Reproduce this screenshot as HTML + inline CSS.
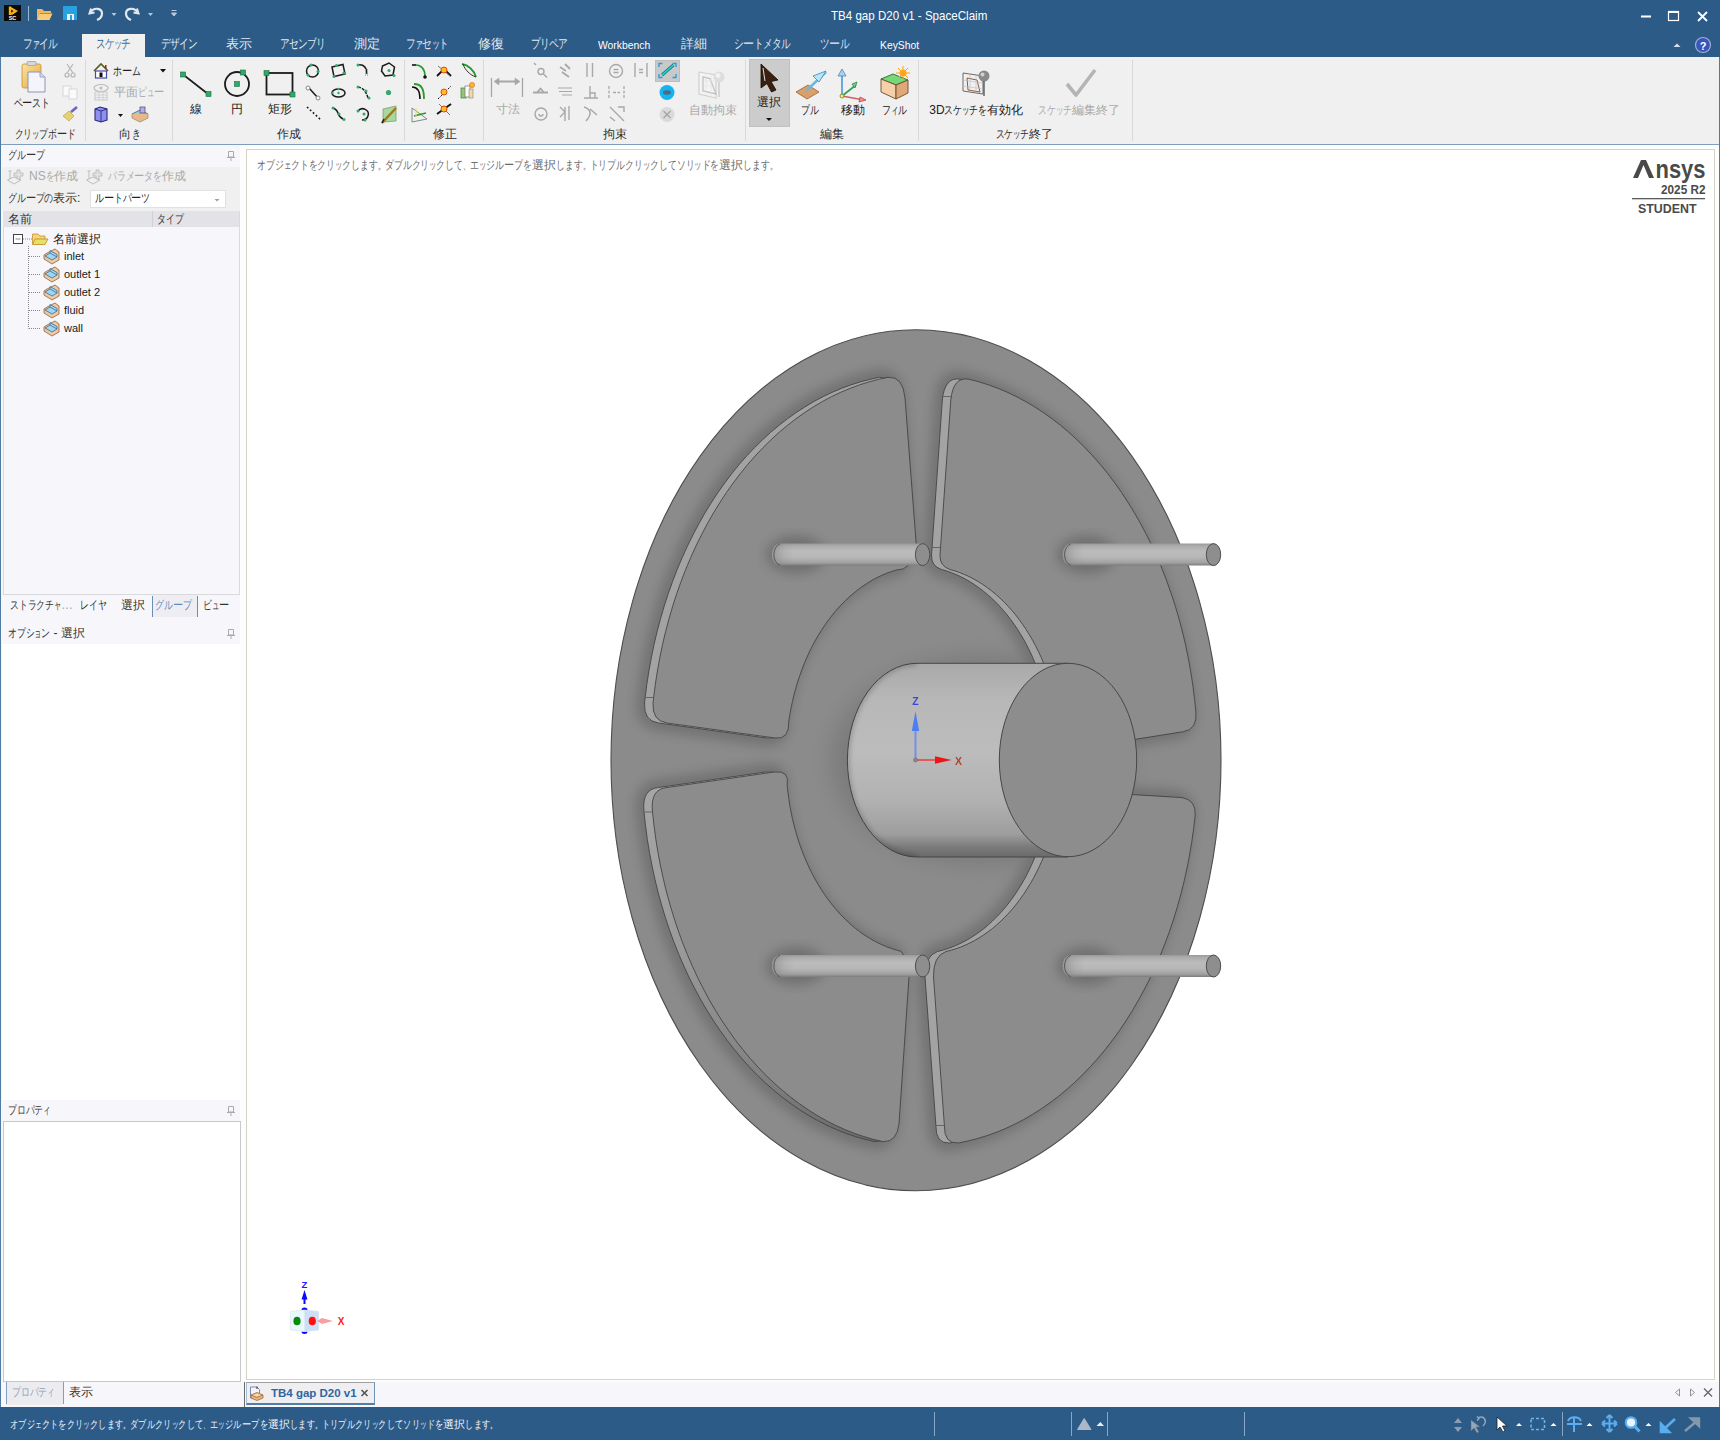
<!DOCTYPE html>
<html><head><meta charset="utf-8">
<style>
*{margin:0;padding:0;box-sizing:border-box}
html,body{width:1720px;height:1440px;overflow:hidden;background:#fff;font-family:"Liberation Sans",sans-serif;font-size:12px;color:#1e1e1e}
.a{position:absolute}
.t{position:absolute;white-space:nowrap}
.j{position:absolute;white-space:nowrap;line-height:12px}
.c{position:absolute;white-space:nowrap;line-height:12px;transform:translateX(-50%)}
b.k,b.ks,b.kl,b.kp{font-weight:normal;display:inline-block;transform-origin:0 0}
b.k{width:.733em;transform:scaleX(.74)}
b.ks{width:.583em;transform:scaleX(.62)}
b.kl{width:.833em;transform:scaleX(.85)}
b.kp{width:.583em;transform:scaleX(.6)}
.tab{top:38px;color:#e2e9f0;font-size:12.5px}
.gl{top:128px;color:#2b2b2b}
.bl{color:#202020}
.dis{color:#a9a9a9}
#title{left:0;top:0;width:1720px;height:57px;background:#2c5b88}
#ribbon{left:1px;top:57px;width:1718px;height:87px;background:#f0f0f0}
#rline{left:0;top:144px;width:1720px;height:1px;background:#7d9ebe}
#lb{left:0;top:57px;width:1px;height:1350px;background:#4f7aa2}
#rb{left:1719px;top:57px;width:1px;height:1350px;background:#4f7aa2}
#panel{left:1px;top:145px;width:239px;height:1262px;background:#f7f7fb}
#gap{left:240px;top:145px;width:1479px;height:1262px;background:#fdfdfe}
#vp{left:246px;top:149px;width:1469px;height:1231px;background:#fff;border:1px solid #d6d3c4}
#status{left:0;top:1407px;width:1720px;height:33px;background:#2c5b88}
.sep{position:absolute;width:1px;top:60px;height:81px;background:#d9d9d9}
</style></head><body>
<div id="title" class="a"></div>
<div id="ribbon" class="a"></div>
<div id="rline" class="a"></div>
<div id="panel" class="a"></div>
<div id="gap" class="a"></div>
<div id="vp" class="a"></div>
<div id="status" class="a"></div>
<div id="lb" class="a"></div>
<div id="rb" class="a"></div>
<!-- TITLE BAR -->
<svg class="a" style="left:0;top:0" width="200" height="30">
  <rect x="4" y="5" width="17" height="16" fill="#0a0a0a"/>
  <path d="M10 6.5 L18 11 L12 15 L10 13.5 L13.5 11 L10 9 Z" fill="#f5b316"/>
  <path d="M10 6.5 L10 15" stroke="#f5b316" stroke-width="2.4"/>
  <text x="12.5" y="20.3" font-size="5.5" font-weight="bold" fill="#fff" text-anchor="middle" font-family="Liberation Sans">SC</text>
  <line x1="28.5" y1="6" x2="28.5" y2="21" stroke="#9fb4c9" stroke-width="1"/>
  <path d="M37 9 L42 9 L44 11 L51 11 L51 13 L40 13 L37 20 Z" fill="#f0b75a"/>
  <path d="M39.5 13.5 L52.5 13.5 L49.5 20 L37 20 Z" fill="#f9cb7a"/>
  <rect x="63" y="6" width="14" height="14" fill="#27a2de"/>
  <rect x="67" y="14" width="7" height="6" fill="#e8f4fb"/>
  <rect x="70" y="15" width="2" height="5" fill="#27a2de"/>
  <path d="M91 8.5 L89.5 13.5 L94.5 12.5" fill="none" stroke="#e3e8ef" stroke-width="2"/>
  <path d="M90.5 12 C94 7 102 8 102 13.5 C102 17 99.5 19 97 20" fill="none" stroke="#e3e8ef" stroke-width="2.2"/>
  <path d="M111.5 13 L116.5 13 L114 16 Z" fill="#b9c7d6"/>
  <path d="M137 8.5 L138.5 13.5 L133.5 12.5" fill="none" stroke="#e3e8ef" stroke-width="2"/>
  <path d="M137.5 12 C134 7 126 8 126 13.5 C126 17 128.5 19 131 20" fill="none" stroke="#e3e8ef" stroke-width="2.2"/>
  <path d="M148 13 L153 13 L150.5 16 Z" fill="#b9c7d6"/>
  <path d="M171.5 10.5 L176.5 10.5 M171.5 13 L176.5 13 L174 16 Z" fill="#b9c7d6" stroke="#b9c7d6" stroke-width="1"/>
</svg>
<div class="t" style="left:831px;top:9px;font-size:13px;line-height:14px;color:#fff;transform-origin:0 0;transform:scaleX(.89)">TB4 gap D20 v1 - SpaceClaim</div>
<svg class="a" style="left:1630px;top:0" width="90" height="57">
  <rect x="11" y="15.5" width="10" height="2" fill="#fff"/>
  <rect x="38.5" y="11.5" width="10" height="9" fill="none" stroke="#fff" stroke-width="1.2"/>
  <rect x="38" y="11" width="11" height="2" fill="#fff"/>
  <path d="M68 12 L77 21 M77 12 L68 21" stroke="#fff" stroke-width="1.8"/>
  <path d="M43.5 47 L47 43.5 L50.5 47 Z" fill="#d8dfe8"/>
  <circle cx="73" cy="45" r="7.5" fill="#3a55b8" stroke="#9fb0d8" stroke-width="1.2"/>
  <text x="73" y="49.5" font-size="11" font-weight="bold" fill="#fff" text-anchor="middle" font-family="Liberation Sans">?</text>
</svg>
<!-- TABS -->
<div class="a" style="left:82px;top:34px;width:63px;height:23px;background:#f0f0f0"></div>
<div class="c tab" style="left:39.5px"><b class="k">フ</b><b class="ks">ァ</b><b class="k">イ</b><b class="k">ル</b></div>
<div class="c tab" style="left:112.5px;color:#3f6e9c"><b class="k">ス</b><b class="k">ケ</b><b class="ks">ッ</b><b class="k">チ</b></div>
<div class="c tab" style="left:179px"><b class="k">デ</b><b class="k">ザ</b><b class="k">イ</b><b class="k">ン</b></div>
<div class="c tab" style="left:239px">表示</div>
<div class="c tab" style="left:302.5px"><b class="k">ア</b><b class="k">セ</b><b class="k">ン</b><b class="k">ブ</b><b class="k">リ</b></div>
<div class="c tab" style="left:366.5px">測定</div>
<div class="c tab" style="left:427px"><b class="k">フ</b><b class="ks">ァ</b><b class="k">セ</b><b class="ks">ッ</b><b class="k">ト</b></div>
<div class="c tab" style="left:490.5px">修復</div>
<div class="c tab" style="left:549px"><b class="k">プ</b><b class="k">リ</b><b class="k">ペ</b><b class="k">ア</b></div>
<div class="t" style="left:598px;top:39px;font-size:11.5px;line-height:12px;color:#fff;transform-origin:0 0;transform:scaleX(.9)">Workbench</div>
<div class="c tab" style="left:694px">詳細</div>
<div class="c tab" style="left:762px"><b class="k">シ</b><b class="kl">ー</b><b class="k">ト</b><b class="k">メ</b><b class="k">タ</b><b class="k">ル</b></div>
<div class="c tab" style="left:834px"><b class="k">ツ</b><b class="kl">ー</b><b class="k">ル</b></div>
<div class="t" style="left:880px;top:39px;font-size:11.5px;line-height:12px;color:#fff;transform-origin:0 0;transform:scaleX(.9)">KeyShot</div>
<!-- RIBBON -->
<div class="sep" style="left:85px"></div>
<div class="sep" style="left:172px"></div>
<div class="sep" style="left:404px"></div>
<div class="sep" style="left:483px"></div>
<div class="sep" style="left:745px"></div>
<div class="sep" style="left:918px"></div>
<div class="sep" style="left:1132px"></div>
<div class="c gl" style="left:44.5px"><b class="k">ク</b><b class="k">リ</b><b class="ks">ッ</b><b class="k">プ</b><b class="k">ボ</b><b class="kl">ー</b><b class="k">ド</b></div>
<div class="c gl" style="left:129.5px">向<b class="k">き</b></div>
<div class="c gl" style="left:289px">作成</div>
<div class="c gl" style="left:444.5px">修正</div>
<div class="c gl" style="left:615px">拘束</div>
<div class="c gl" style="left:832px">編集</div>
<div class="c gl" style="left:1024.5px"><b class="k">ス</b><b class="k">ケ</b><b class="ks">ッ</b><b class="k">チ</b>終了</div>
<!-- buttons highlight -->
<div class="a" style="left:655px;top:60px;width:25px;height:22px;background:#c9c9c9;border:1px solid #bdbdbd"></div>
<div class="a" style="left:749px;top:59px;width:41px;height:68px;background:#cccccc;border:1px solid #c0c0c0"></div>
<!-- labels -->
<div class="c bl" style="left:31.5px;top:97px"><b class="k">ペ</b><b class="kl">ー</b><b class="k">ス</b><b class="k">ト</b></div>
<div class="j bl" style="left:113px;top:65px"><b class="k">ホ</b><b class="kl">ー</b><b class="k">ム</b></div>
<div class="j dis" style="left:114px;top:86px">平面<b class="k">ピ</b><b class="ks">ュ</b><b class="kl">ー</b></div>
<div class="c bl" style="left:195.5px;top:103px">線</div>
<div class="c bl" style="left:237px;top:103px">円</div>
<div class="c bl" style="left:279.5px;top:103px">矩形</div>
<div class="c dis" style="left:507.5px;top:103px">寸法</div>
<div class="c dis" style="left:712.5px;top:104px">自動拘束</div>
<div class="c bl" style="left:769px;top:96px">選択</div>
<div class="c bl" style="left:810px;top:104px"><b class="k">プ</b><b class="k">ル</b></div>
<div class="c bl" style="left:852.5px;top:104px">移動</div>
<div class="c bl" style="left:894px;top:104px"><b class="k">フ</b><b class="ks">ィ</b><b class="k">ル</b></div>
<div class="c bl" style="left:976px;top:104px">3D<b class="k">ス</b><b class="k">ケ</b><b class="ks">ッ</b><b class="k">チ</b><b class="k">を</b>有効化</div>
<div class="c dis" style="left:1079px;top:104px"><b class="k">ス</b><b class="k">ケ</b><b class="ks">ッ</b><b class="k">チ</b>編集終了</div>
<svg class="a" style="left:0;top:57px" width="1140" height="87" viewBox="0 57 1140 87">
 <defs>
  <linearGradient id="clip" x1="0" y1="0" x2="1" y2="1"><stop offset="0" stop-color="#fbe3a3"/><stop offset="1" stop-color="#e2a73e"/></linearGradient>
 </defs>
 <!-- paste -->
 <rect x="22" y="64" width="19" height="24" rx="2" fill="url(#clip)" stroke="#c98f2e" stroke-width=".8"/>
 <rect x="27" y="61.5" width="9" height="4" rx="1" fill="#d8d8d8" stroke="#9a9a9a" stroke-width=".7"/>
 <path d="M28 72 L40 72 L45 77 L45 92 L28 92 Z" fill="#f4f4fa" stroke="#8a95b5" stroke-width="1"/>
 <path d="M40 72 L40 77 L45 77" fill="#d5dbe9" stroke="#8a95b5" stroke-width=".8"/>
 <!-- cut/copy/brush (gray) -->
 <path d="M67 64 L73 73 M73 64 L67 73" stroke="#b5b5b5" stroke-width="1.2"/>
 <circle cx="67" cy="75" r="2" fill="none" stroke="#b5b5b5" stroke-width="1.2"/><circle cx="73" cy="75" r="2" fill="none" stroke="#b5b5b5" stroke-width="1.2"/>
 <rect x="63" y="86" width="8" height="10" fill="#fafafa" stroke="#cfcfcf" stroke-width=".8"/>
 <rect x="69" y="89" width="8" height="10" fill="#fafafa" stroke="#cfcfcf" stroke-width=".8"/>
 <path d="M63 116 L69 111 L74 116 L69 121 Z" fill="#e6d272" stroke="#a89a4a" stroke-width=".6"/>
 <path d="M71 112 L77 107" stroke="#6d64c0" stroke-width="2.6"/>
 <!-- home -->
 <path d="M94 71 L101 64 L108 71" fill="none" stroke="#5a5a1e" stroke-width="1.6"/>
 <rect x="95.5" y="71" width="11" height="7" fill="#fff" stroke="#4848a8" stroke-width="1.2"/>
 <rect x="99.5" y="72.5" width="3" height="4.5" fill="#111"/>
 <rect x="105" y="65" width="1.5" height="4" fill="#b81818"/>
 <path d="M160 69 L166 69 L163 72.5 Z" fill="#111"/>
 <!-- plane view gray -->
 <ellipse cx="101" cy="88" rx="7" ry="3.5" fill="none" stroke="#bdbdbd" stroke-width="1.2"/>
 <circle cx="101" cy="88" r="1.6" fill="#bdbdbd"/>
 <rect x="95" y="92" width="12" height="8" fill="none" stroke="#c8c8c8" stroke-width="1"/>
 <path d="M95 95 H107 M95 97.5 H107 M99 92 V100 M103 92 V100" stroke="#c8c8c8" stroke-width=".7"/>
 <!-- cube -->
 <path d="M95 109 L100 107 L107 109 L107 120 L101 122 L95 120 Z" fill="#8f8ff0" stroke="#2a2a7a" stroke-width="1.1"/>
 <path d="M95 109 L101 111 L107 109 M101 111 L101 122" fill="none" stroke="#2a2a7a" stroke-width=".9"/>
 <path d="M118 114 L123 114 L120.5 117 Z" fill="#111"/>
 <path d="M132 114 L140 110 L148 114 L140 118 Z" fill="#8fd0ef" stroke="#445" stroke-width=".7"/>
 <path d="M132 114 L132 118 L140 122 L148 118 L148 114" fill="#e9b88a" stroke="#886" stroke-width=".7"/>
 <rect x="140" y="107" width="5" height="6" fill="#b0b0ea" stroke="#446" stroke-width=".7"/>
 <!-- line circle rect -->
 <line x1="183" y1="74.5" x2="208" y2="94" stroke="#1b1b1b" stroke-width="1.6"/>
 <rect x="180.5" y="72" width="5" height="5" fill="#33a86a" stroke="#16703e" stroke-width=".6"/>
 <rect x="206" y="91.5" width="5" height="5" fill="#33a86a" stroke="#16703e" stroke-width=".6"/>
 <circle cx="237" cy="84" r="12" fill="none" stroke="#1b1b1b" stroke-width="1.8"/>
 <rect x="234.5" y="81.5" width="5" height="5" fill="#33a86a" stroke="#16703e" stroke-width=".6"/>
 <rect x="240.5" y="70" width="5" height="5" fill="#33a86a" stroke="#16703e" stroke-width=".6"/>
 <rect x="266.5" y="73" width="26" height="21.5" fill="none" stroke="#1b1b1b" stroke-width="1.8"/>
 <rect x="264" y="70.5" width="5" height="5" fill="#33a86a" stroke="#16703e" stroke-width=".6"/>
 <rect x="290" y="92" width="5" height="5" fill="#33a86a" stroke="#16703e" stroke-width=".6"/>
 <!-- small sketch tools 4x3 -->
 <g fill="none" stroke="#1b1b1b" stroke-width="1.5">
  <circle cx="312.5" cy="71" r="6"/>
  <path d="M332 67 L343 64.5 L345 74 L334 76.5 Z"/>
  <path d="M358 65 C364 64 367 68 367 74"/>
  <path d="M382.5 66 L389 63 L394.5 67 L393 75 L385 76 L381.5 71 Z"/>
  <path d="M309 88 L318 98" stroke="#1b1b1b"/>
  <ellipse cx="338.5" cy="93" rx="6.5" ry="4"/>
  <path d="M358 87 C363 88 366 91 368 98" stroke-dasharray="3 1.2"/>
  <path d="M307 107 L321 120" stroke-dasharray="1.8 2.2" stroke-width="1.6"/>
  <path d="M333 108 C340 110 336 116 343 119"/>
  <path d="M358 111 C362 106 370 110 368 116 C367 119 364 120 362 120"/>
 </g>
 <g fill="#33a86a">
  <circle cx="311" cy="65" r="1.5"/><circle cx="318" cy="71.5" r="1.5"/><circle cx="308" cy="75" r="1.5"/>
  <circle cx="336.5" cy="65.5" r="1.5"/><circle cx="344" cy="73" r="1.5"/><circle cx="334" cy="76.5" r="1.5"/>
  <circle cx="358" cy="65" r="1.5"/><circle cx="389" cy="70.5" r="1.5"/><circle cx="394" cy="75.5" r="1.5"/>
  <circle cx="338.5" cy="93" r="1.2"/><circle cx="338.5" cy="89" r="1.2"/><circle cx="332.5" cy="93" r="1.2"/>
  <circle cx="358" cy="87" r="1.5"/><circle cx="366" cy="91" r="1.5"/><circle cx="369" cy="98" r="1.5"/>
  <circle cx="388.5" cy="92.5" r="2.6"/>
  <circle cx="333" cy="108" r="1.5"/><circle cx="339" cy="114" r="1.5"/><circle cx="344" cy="119.5" r="1.5"/>
  <circle cx="358" cy="111" r="1.5"/><circle cx="364" cy="114" r="1.5"/><circle cx="365" cy="120" r="1.5"/>
 </g>
 <path d="M365.5 69 V76 M367.5 69 V76" stroke="#aaa" stroke-width=".8"/>
 <circle cx="308" cy="88" r="2" fill="#fff" stroke="#888" stroke-width="1"/><circle cx="318" cy="98" r="2" fill="#fff" stroke="#888" stroke-width="1"/>
 <path d="M383 109 L396 106 L396 121 L383 122 Z" fill="#a8d8a0" stroke="#6a9a5a" stroke-width=".7"/>
 <path d="M382 123 L396 108" stroke="#a07818" stroke-width="2.5"/>
 <path d="M382 123 L384 119" stroke="#222" stroke-width="1.5"/>
 <!-- modify icons -->
 <g fill="none" stroke-width="1.6">
  <path d="M412 65 L416 65" stroke="#111"/>
  <path d="M416 65 C421 65 425 69 425 76" stroke="#2a9a2a"/>
  <circle cx="425" cy="77" r="1" fill="#111" stroke="#111"/>
  <path d="M437 76 L444 69 L451 76" stroke="#111" stroke-width="1.8"/>
  <path d="M438 66 L450 76" stroke="#777" stroke-width="1"/>
  <path d="M462 64 C468 65 474 70 476 77" stroke="#2a9a2a" stroke-width="1.8"/>
  <path d="M463 64 C465 70 470 75 476 77" stroke="#333" stroke-width="1"/>
  <path d="M412 87 C417 87 420 90 420 99" stroke="#111"/>
  <path d="M414 84 C421 84 424 88 424 99" stroke="#2a9a2a" stroke-width="1.8"/>
  <path d="M438 99 L451 86" stroke="#111" stroke-width="1" stroke-dasharray="2 1.5"/>
  <path d="M437 114 L451 104" stroke="#111" stroke-width="1.9"/>
  <path d="M439 104 L450 115" stroke="#777" stroke-width="1"/>
  <path d="M412 122 L427 119 L412 108 Z" stroke="#888" stroke-width="1"/>
  <path d="M414 116 L426 113" stroke="#2a9a2a" stroke-width="1.5"/>
  <path d="M416 108 V117" stroke="#e0e060" stroke-width="1"/>
 </g>
 <circle cx="444" cy="70" r="3" fill="#f5c020" stroke="#e04a10" stroke-width="1"/>
 <circle cx="444" cy="92" r="3" fill="#f5c020" stroke="#e04a10" stroke-width="1"/>
 <circle cx="444" cy="109" r="3" fill="#f5c020" stroke="#e04a10" stroke-width="1"/>
 <rect x="461" y="88" width="5" height="10" fill="#8fc870" stroke="#4a7a30" stroke-width=".7"/>
 <rect x="465" y="86" width="5" height="11" fill="#fff" stroke="#777" stroke-width=".7"/>
 <rect x="469" y="89" width="4" height="9" fill="#f3d5b0" stroke="#886" stroke-width=".6"/>
 <circle cx="472" cy="85" r="2.6" fill="#f7b733" stroke="#e06a10" stroke-width=".6"/>
 <!-- dimension (gray) -->
 <g stroke="#a6a6a6" fill="#a6a6a6">
  <path d="M491.5 78 V97 M522.5 78 V97" stroke-width="1.3"/>
  <path d="M496 81.5 H518" stroke-width="2"/>
  <path d="M494 81.5 L499 78 L499 85 Z M520 81.5 L515 78 L515 85 Z" stroke-width=".5"/>
 </g>
 <!-- constraints gray -->
 <g fill="none" stroke="#a8a8a8" stroke-width="1.4">
  <circle cx="541" cy="71.5" r="3"/><path d="M543.5 74 L547 77.5 M534 63 L536 65"/>
  <path d="M560 67 L566 71 M565 64 L570 69 M562 72 L569 77" stroke-width="1.8"/>
  <path d="M587 63 V77 M592.5 63 V77"/>
  <circle cx="616" cy="71" r="6.5"/><path d="M613.5 69.5 H618.5 M613.5 72.5 H618.5"/>
  <path d="M635 63 V77 M647 63 V77 M639 69.5 H643 M639 72.5 H643"/>
  <path d="M533 92.5 H548 M537 92.5 L540.5 88.5 L544 92.5" stroke-width="1.8"/>
  <path d="M558 88 H572 M559 91.5 H572 M562 95 L572 95" stroke-width="1.2"/>
  <path d="M584 98 H598 M590 86 V98 M590 93 H595 V98" stroke-width="1.4"/>
  <path d="M609 86 V99 M624 86 V99 M613 92.5 H620" stroke-width="1.3" stroke-dasharray="3 1.5"/>
  <circle cx="541" cy="114" r="6"/><path d="M539 114 A2 2 0 0 0 543 114"/>
  <path d="M560 107 L565 112 L560 117 M565 107 V121 M569 106 V120"/>
  <path d="M584 107 C590 109 593 113 586 121 M590 109 L597 115" stroke-width="1.5"/>
  <path d="M610 107 L624 121 M618 107 L624 107 L624 112 M610 117 L615 121" stroke-width="1.4"/>
 </g>
 <path d="M659 67 V63.5 H662.5 M672.5 63.5 H676 V67 M676 74 V77.5 H672.5 M662.5 77.5 H659 V74" fill="none" stroke="#2a9ee0" stroke-width="1.4"/>
 <path d="M662 75 L673.5 65" stroke="#0e7a80" stroke-width="3"/>
 <path d="M662 75 L673.5 65" stroke="#2fd6d0" stroke-width="1.6"/>
 <circle cx="667" cy="92.5" r="7.5" fill="#14b4f0"/>
 <ellipse cx="667" cy="92.5" rx="4" ry="2.2" fill="#4d6a80"/>
 <circle cx="667" cy="114.5" r="7.5" fill="#dadada"/>
 <path d="M663.5 111 L670.5 118 M670.5 111 L663.5 118" stroke="#a5a5a5" stroke-width="1.4"/>
 <!-- auto constraint gray -->
 <path d="M699 72 L716 75 L716 98 L699 94 Z" fill="#f4f4f4" stroke="#d0d0d0" stroke-width="1.2"/>
 <path d="M703 77 L710 78.5 L716 94 L703 91 Z" fill="none" stroke="#c2c2c2" stroke-width="1.3"/>
 <path d="M701 81 H715 M701 86 H715 M706 73 V96 M711 74 V97" stroke="#e0e0e0" stroke-width=".6"/>
 <path d="M719 80 V97" stroke="#cfcfcf" stroke-width="1.6"/>
 <circle cx="719" cy="77" r="5.6" fill="#dedede"/>
 <circle cx="718" cy="75.5" r="2.4" fill="#f2f2f2"/>
 <!-- select cursor -->
 <path d="M761 64 L778 80 L771 81.5 L776 90 L771.5 92 L767 83.5 L761 88 Z" fill="#3a2010" stroke="#1a0a00" stroke-width=".8"/>
 <path d="M763 68 L765 81" stroke="#ddd" stroke-width="1"/>
 <path d="M766 118 L772 118 L769 121 Z" fill="#111"/>
 <!-- pull -->
 <path d="M796 92 L808 85 L819 92 L807 99 Z" fill="#d9a06a" stroke="#9a6030" stroke-width=".8"/>
 <path d="M806 91 L826 72" stroke="#6ab8e0" stroke-width="2.5"/>
 <path d="M826 71 L813 76 L819 82 Z" fill="#b8e4f8" stroke="#3a88b8" stroke-width=".8"/>
 <!-- move -->
 <path d="M842 96 V73" stroke="#6aaad8" stroke-width="2"/><path d="M838 76 L842 69 L846 76 Z" fill="#a8d4f0" stroke="#3a78b0" stroke-width=".7"/>
 <path d="M842 96 L856 85" stroke="#30a050" stroke-width="1.6"/><path d="M852 84 L857 82 L855 88 Z" fill="#70d080" stroke="#208040" stroke-width=".7"/>
 <path d="M842 96 L864 100" stroke="#d06060" stroke-width="1.6"/><path d="M860 97 L866 100 L859 102 Z" fill="#f09090" stroke="#c03030" stroke-width=".7"/>
 <circle cx="842" cy="96" r="2" fill="#f0f070" stroke="#607020" stroke-width=".7"/>
 <!-- fill -->
 <path d="M881 79 L893 74 L908 80 L896 85 Z" fill="#78d878" stroke="#2a6a2a" stroke-width=".9"/>
 <path d="M881 79 L881 92 L896 99 L896 85 Z" fill="#f6d0a8" stroke="#6a4a2a" stroke-width=".9"/>
 <path d="M896 85 L908 80 L908 93 L896 99 Z" fill="#e0a878" stroke="#6a4a2a" stroke-width=".9"/>
 <circle cx="903" cy="73" r="3.5" fill="#ffb020"/>
 <path d="M903 66 V80 M896 73 H910 M898 68 L908 78 M908 68 L898 78" stroke="#ffa010" stroke-width="1"/>
 <!-- 3D sketch -->
 <path d="M963 73 L983 76 L983 94 L963 91 Z" fill="#f0f0f0" stroke="#6a6a6a" stroke-width="1"/>
 <path d="M967 78 L977 80 L980 92 L968 90 Z" fill="none" stroke="#8a5a3a" stroke-width="1"/>
 <path d="M963 80 L983 83 M963 86 L983 89 M970 74 V92 M976 75 V93" stroke="#b8b8b8" stroke-width=".6"/>
 <circle cx="984" cy="76" r="5.5" fill="#8a8a8a"/><circle cx="982.5" cy="74.5" r="2" fill="#d0d0d0"/>
 <path d="M984 81 V96" stroke="#5a5a5a" stroke-width="1.4"/>
 <path d="M1067 84 L1076 95 L1095 70" fill="none" stroke="#b4b4b4" stroke-width="3.6" stroke-linejoin="round"/>
</svg>
<!-- LEFT PANEL -->
<div class="a" style="left:2px;top:167px;width:238px;height:44px;background:#f0f0f0"></div>
<div class="j" style="left:8px;top:149px;color:#333"><b class="k">グ</b><b class="k">ル</b><b class="kl">ー</b><b class="k">プ</b></div>
<svg class="a" style="left:0;top:145px" width="243" height="1262" viewBox="0 145 243 1262">
 <g id="pinicon"><path d="M228.5 151.5 H233.5 V157 H228.5 Z M227 157.5 H235 M231 158 V161" fill="none" stroke="#a9a9b0" stroke-width="1"/></g>
 <!-- NS icons gray -->
 <g fill="none" stroke="#bdbdbd" stroke-width="1">
  <path d="M10 171 V179 M8.5 171 H11.5 M7.5 180 L14 184 L21 180 L14 177 Z"/>
  <path d="M89 171 V179 M87.5 171 H90.5 M86.5 180 L93 184 L100 180 L93 177 Z"/>
 </g>
 <path d="M17 170 h3 v3 h3 v3 h-3 v3 h-3 v-3 h-3 v-3 h3 Z" fill="#e2e2e2" stroke="#b8b8b8" stroke-width=".8"/>
 <path d="M96 170 h3 v3 h3 v3 h-3 v3 h-3 v-3 h-3 v-3 h3 Z" fill="#e2e2e2" stroke="#b8b8b8" stroke-width=".8"/>
 <!-- combo -->
 <rect x="90.5" y="190.5" width="135" height="17" fill="#fff" stroke="#e1e1e1"/>
 <path d="M214.5 199 L219.5 199 L217 201.5 Z" fill="#a0a0a0"/>
 <!-- column header -->
 <rect x="3" y="211" width="236" height="16" fill="#e3e3e7"/>
 <line x1="152.5" y1="211" x2="152.5" y2="227" stroke="#d0d0d6"/>
 <line x1="3.5" y1="227" x2="3.5" y2="594" stroke="#dadade"/>
 <line x1="239.5" y1="211" x2="239.5" y2="594" stroke="#dadade"/>
 <line x1="3" y1="594.5" x2="240" y2="594.5" stroke="#dadade"/>
 <!-- tree -->
 <rect x="13.5" y="234.5" width="9" height="9" fill="#fff" stroke="#444" stroke-width="1"/>
 <line x1="15.5" y1="239" x2="20.5" y2="239" stroke="#888"/>
 <path d="M23 239 H32 M28.5 246 V328.5 M29 256.5 H41 M29 274.5 H41 M29 292.5 H41 M29 310.5 H41 M29 328.5 H41" stroke="#888" stroke-width="1" stroke-dasharray="1 1" fill="none"/>
 <path d="M32.5 234 L38 234 L40 236 L45 236 L45 240 L36 240 L32.5 244 Z" fill="#f2d67a" stroke="#c99030" stroke-width=".8"/>
 <path d="M35 239 L48 239 L45 244.5 L32.5 244.5 Z" fill="#e4e266" stroke="#c08a20" stroke-width=".8"/>
 <g id="ns">
  <path d="M44 255 L44 259 L52 264 L59 260 L59 252 L55 249 L47 253 Z" fill="#efc9a0" stroke="#8a6040" stroke-width=".8"/>
  <path d="M45 256 L52 260 L57 257 L50 253 Z M50 253 L50 250.5 L57 254.5 L57 257" fill="#9fd6f2" stroke="#3a6a90" stroke-width=".8"/>
 </g>
 <use href="#ns" y="18"/><use href="#ns" y="36"/><use href="#ns" y="54"/><use href="#ns" y="72"/>
 <!-- tabs row -->
 <rect x="152.5" y="595" width="45" height="22" fill="#eeeef2"/>
 <line x1="152.5" y1="596" x2="152.5" y2="617" stroke="#6a8fb5"/>
 <line x1="197.5" y1="596" x2="197.5" y2="617" stroke="#6a8fb5"/>
 <!-- option header -->
 <rect x="4" y="624" width="236" height="20" fill="#f7f7fb"/>
 <rect x="2" y="644" width="238" height="456" fill="#ffffff"/>
 <rect x="4" y="1101" width="236" height="20" fill="#f7f7fb"/>
 <rect x="3.5" y="1121.5" width="237" height="260" fill="#fff" stroke="#c8c8c8"/>
 <!-- bottom tabs -->
 <rect x="6" y="1382" width="57" height="23" fill="#ececf0"/>
 <line x1="6.5" y1="1382" x2="6.5" y2="1404" stroke="#7f9fc0"/>
 <line x1="63.5" y1="1382" x2="63.5" y2="1404" stroke="#7f9fc0"/>
 <use href="#pinicon" y="478"/>
 <use href="#pinicon" y="955"/>
</svg>
<div class="j dis" style="left:29px;top:170px">NS<b class="k">を</b>作成</div>
<div class="j dis" style="left:108px;top:170px"><b class="k">パ</b><b class="k">ラ</b><b class="k">メ</b><b class="kl">ー</b><b class="k">タ</b><b class="k">を</b>作成</div>
<div class="j" style="left:8px;top:192px;color:#333"><b class="k">グ</b><b class="k">ル</b><b class="kl">ー</b><b class="k">プ</b><b class="k">の</b>表示:</div>
<div class="j" style="left:95px;top:192px;color:#222"><b class="k">ル</b><b class="kl">ー</b><b class="k">ト</b><b class="k">パ</b><b class="kl">ー</b><b class="k">ツ</b></div>
<div class="j" style="left:8px;top:213px;color:#333">名前</div>
<div class="j" style="left:157px;top:213px;color:#333"><b class="k">タ</b><b class="k">イ</b><b class="k">プ</b></div>
<div class="j" style="left:53px;top:233px;color:#222">名前選択</div>
<div class="t" style="left:64px;top:250px;line-height:12px;font-size:11px;color:#1a1a1a">inlet</div>
<div class="t" style="left:64px;top:268px;line-height:12px;font-size:11px;color:#1a1a1a">outlet 1</div>
<div class="t" style="left:64px;top:286px;line-height:12px;font-size:11px;color:#1a1a1a">outlet 2</div>
<div class="t" style="left:64px;top:304px;line-height:12px;font-size:11px;color:#1a1a1a">fluid</div>
<div class="t" style="left:64px;top:322px;line-height:12px;font-size:11px;color:#1a1a1a">wall</div>
<div class="j" style="left:10px;top:599px;color:#333"><b class="k">ス</b><b class="k">ト</b><b class="k">ラ</b><b class="k">ク</b><b class="k">チ</b><b class="ks">ャ</b><span style="color:#9aa6b6">…</span></div>
<div class="j" style="left:80px;top:599px;color:#333"><b class="k">レ</b><b class="k">イ</b><b class="k">ヤ</b></div>
<div class="j" style="left:121px;top:599px;color:#333">選択</div>
<div class="j" style="left:155px;top:599px;color:#5f8cba"><b class="k">グ</b><b class="k">ル</b><b class="kl">ー</b><b class="k">プ</b></div>
<div class="j" style="left:203px;top:599px;color:#333"><b class="k">ビ</b><b class="ks">ュ</b><b class="kl">ー</b></div>
<div class="j" style="left:8px;top:627px;color:#333"><b class="k">オ</b><b class="k">プ</b><b class="k">シ</b><b class="ks">ョ</b><b class="k">ン</b> - 選択</div>
<div class="j" style="left:8px;top:1104px;color:#333"><b class="k">プ</b><b class="k">ロ</b><b class="k">パ</b><b class="k">テ</b><b class="ks">ィ</b></div>
<div class="j" style="left:12px;top:1386px;color:#8e9cb0"><b class="k">プ</b><b class="k">ロ</b><b class="k">パ</b><b class="k">テ</b><b class="ks">ィ</b></div>
<div class="j" style="left:69px;top:1386px;color:#333">表示</div>
<!-- VIEWPORT EXTRAS -->
<div class="j" style="left:257px;top:159px;color:#6b6b6b;font-size:12.15px"><b class="k">オ</b><b class="k">ブ</b><b class="k">ジ</b><b class="ks">ェ</b><b class="k">ク</b><b class="k">ト</b><b class="k">を</b><b class="k">ク</b><b class="k">リ</b><b class="ks">ッ</b><b class="k">ク</b><b class="k">し</b><b class="k">ま</b><b class="k">す</b><b class="kp">。</b><b class="k">ダ</b><b class="k">ブ</b><b class="k">ル</b><b class="k">ク</b><b class="k">リ</b><b class="ks">ッ</b><b class="k">ク</b><b class="k">し</b><b class="k">て</b><b class="kp">、</b><b class="k">エ</b><b class="ks">ッ</b><b class="k">ジ</b><b class="k">ル</b><b class="kl">ー</b><b class="k">プ</b><b class="k">を</b>選択<b class="k">し</b><b class="k">ま</b><b class="k">す</b><b class="kp">。</b><b class="k">ト</b><b class="k">リ</b><b class="k">プ</b><b class="k">ル</b><b class="k">ク</b><b class="k">リ</b><b class="ks">ッ</b><b class="k">ク</b><b class="k">し</b><b class="k">て</b><b class="k">ソ</b><b class="k">リ</b><b class="ks">ッ</b><b class="k">ド</b><b class="k">を</b>選択<b class="k">し</b><b class="k">ま</b><b class="k">す</b><b class="kp">。</b></div>
<svg class="a" style="left:1620px;top:150px" width="94" height="70" viewBox="1620 150 94 70">
 <path d="M1633 178 L1641 160 L1646 160 L1654 178 L1649 178 L1643.5 165 L1638 178 Z" fill="#4a4a4a"/>
 <text x="1705.5" y="178" font-size="25" font-weight="bold" fill="#4a4a4a" text-anchor="end" font-family="Liberation Sans" textLength="50" lengthAdjust="spacingAndGlyphs">nsys</text>
 <text x="1705.5" y="194" font-size="12.4" font-weight="bold" fill="#4a4a4a" text-anchor="end" font-family="Liberation Sans" textLength="44.5" lengthAdjust="spacingAndGlyphs">2025 R2</text>
 <rect x="1632" y="198" width="73" height="1.3" fill="#5a5a5a"/>
 <text x="1667.3" y="213" font-size="12.4" font-weight="bold" fill="#4a4a4a" text-anchor="middle" font-family="Liberation Sans" textLength="58.6" lengthAdjust="spacingAndGlyphs">STUDENT</text>
</svg>
<svg class="a" style="left:270px;top:1260px" width="100" height="90" viewBox="270 1260 100 90">
 <text x="304.5" y="1287.5" font-size="9.5" font-weight="bold" fill="#1a1aff" text-anchor="middle" font-family="Liberation Sans">Z</text>
 <path d="M301.5 1299.5 L304.5 1290 L307.5 1299.5 Z" fill="#0a0aff"/>
 <rect x="303.5" y="1299" width="2" height="5" fill="#0a0aff"/>
 <path d="M301.5 1310 A3 2.5 0 0 1 307.5 1310 Z" fill="#0a0aff"/>
 <path d="M301.5 1331.5 A3 2.5 0 0 0 307.5 1331.5 Z" fill="#0a0aff"/>
 <path d="M290.5 1311.5 L304.5 1310 L318.5 1311.5 L318.5 1330 L304.5 1331.5 L290.5 1330 Z" fill="#e8f8fc" stroke="#d8e2ee" stroke-width=".6"/>
 <path d="M304.5 1310 L318.5 1311.5 L318.5 1330 L304.5 1331.5 Z" fill="#cddff5"/>
 <ellipse cx="297" cy="1321" rx="3.6" ry="4.3" fill="#0a8a0a"/>
 <ellipse cx="312.3" cy="1321" rx="3.6" ry="4.3" fill="#ff1010"/>
 <path d="M317 1321 L322 1318 L333 1321 L322 1324 Z" fill="#f7a0a0"/>
 <text x="341" y="1325" font-size="10" font-weight="bold" fill="#ff2020" text-anchor="middle" font-family="Liberation Sans">X</text>
</svg>
<!-- DOC TAB -->
<div class="a" style="left:240px;top:1382px;width:1479px;height:25px;background:#f7f7fb"></div>
<div class="a" style="left:244px;top:1382px;width:1px;height:25px;background:#6a6a6a"></div>
<div class="a" style="left:246px;top:1382px;width:129px;height:23px;background:#efeff1;border-left:1px solid #a9bdd3;border-right:1px solid #6f95bd;border-top:1px solid #a0a0a0;border-bottom:2px solid #4f7eac"></div>
<svg class="a" style="left:248px;top:1384px" width="20" height="20">
 <path d="M2.5 3 L9 3 L11.5 5.5 L11.5 14 L2.5 14 Z" fill="#f4f4f4" stroke="#7a8cb0" stroke-width="1"/>
 <path d="M9 2.5 V5" stroke="#333" stroke-width="1"/>
 <path d="M3 11 L9 8.5 L15 11 L15 14 L9 16.5 L3 14 Z" fill="#e8b880" stroke="#9a6a3a" stroke-width=".8"/>
 <path d="M3 11 L9 13.5 L15 11" fill="none" stroke="#9a6a3a" stroke-width=".7"/>
 <path d="M5 11 L9 9.5 L13 11 L9 12.5 Z" fill="#fbd8ae"/>
</svg>
<div class="t" style="left:271px;top:1387px;font-size:11.5px;line-height:12px;font-weight:bold;color:#2f65a0">TB4 gap D20 v1</div>
<svg class="a" style="left:359px;top:1387px" width="12" height="12"><path d="M2.5 3 L8.5 9 M8.5 3 L2.5 9" stroke="#555" stroke-width="1.6"/></svg>
<svg class="a" style="left:1665px;top:1384px" width="54" height="20">
 <path d="M14.5 5 L10.5 8.5 L14.5 12 Z" fill="none" stroke="#888" stroke-width=".9"/>
 <path d="M25.5 5 L29.5 8.5 L25.5 12 Z" fill="none" stroke="#888" stroke-width=".9"/>
 <path d="M39 4.5 L47 12.5 M47 4.5 L39 12.5" stroke="#666" stroke-width="1.3"/>
</svg>
<!-- STATUS BAR -->
<div class="j" style="left:10px;top:1418px;color:#f2f4f8;font-size:11.4px"><b class="k">オ</b><b class="k">ブ</b><b class="k">ジ</b><b class="ks">ェ</b><b class="k">ク</b><b class="k">ト</b><b class="k">を</b><b class="k">ク</b><b class="k">リ</b><b class="ks">ッ</b><b class="k">ク</b><b class="k">し</b><b class="k">ま</b><b class="k">す</b><b class="kp">。</b><b class="k">ダ</b><b class="k">ブ</b><b class="k">ル</b><b class="k">ク</b><b class="k">リ</b><b class="ks">ッ</b><b class="k">ク</b><b class="k">し</b><b class="k">て</b><b class="kp">、</b><b class="k">エ</b><b class="ks">ッ</b><b class="k">ジ</b><b class="k">ル</b><b class="kl">ー</b><b class="k">プ</b><b class="k">を</b>選択<b class="k">し</b><b class="k">ま</b><b class="k">す</b><b class="kp">。</b><b class="k">ト</b><b class="k">リ</b><b class="k">プ</b><b class="k">ル</b><b class="k">ク</b><b class="k">リ</b><b class="ks">ッ</b><b class="k">ク</b><b class="k">し</b><b class="k">て</b><b class="k">ソ</b><b class="k">リ</b><b class="ks">ッ</b><b class="k">ド</b><b class="k">を</b>選択<b class="k">し</b><b class="k">ま</b><b class="k">す</b><b class="kp">。</b></div>
<svg class="a" style="left:900px;top:1407px" width="820" height="33" viewBox="900 1407 820 33">
 <g stroke="#8aa6c4" stroke-width="1"><path d="M934.5 1412 V1436 M1071.5 1412 V1436 M1107.5 1412 V1436 M1244.5 1412 V1436 M1562.5 1412 V1436"/></g>
 <path d="M1077.5 1429.5 L1084.2 1418.5 L1091 1429.5 Z" fill="#aab8c8" stroke="#aab8c8" stroke-width="1" stroke-linejoin="round"/>
 <path d="M1096.5 1426 L1100.3 1422 L1104 1426 Z" fill="#e8eef4"/>
 <path d="M1454 1423 L1458 1418 L1462 1423 Z M1454 1427 L1458 1432 L1462 1427 Z" fill="#8b9db2"/>
 <path d="M1471 1420 L1471 1431 L1474 1428 L1477 1433 L1479 1432 L1476 1427 L1480 1427 Z" fill="#93a6bb" stroke="#5a6a7a" stroke-width=".5"/>
 <path d="M1478 1418 C1484 1415 1488 1421 1483 1426 M1477 1416.5 L1479 1418.5 L1477 1420.5" fill="none" stroke="#93a6bb" stroke-width="1.5"/>
 <path d="M1497 1417 L1497 1430 L1500 1427 L1503 1432 L1505 1431 L1502.5 1426 L1507 1426 Z" fill="#fff" stroke="#222" stroke-width=".8"/>
 <path d="M1516 1426 L1519 1423 L1522 1426 Z" fill="#fff"/>
 <rect x="1531" y="1418.5" width="13.5" height="11" fill="none" stroke="#6ab4f0" stroke-width="1.6" stroke-dasharray="3 2"/>
 <path d="M1550.5 1426 L1553.5 1423 L1556.5 1426 Z" fill="#fff"/>
 <path d="M1567 1424 H1582 M1574 1417 V1432 M1568 1421 C1570 1416 1579 1416 1581 1421" fill="none" stroke="#5aaef0" stroke-width="2"/>
 <path d="M1586.5 1426 L1589.5 1423 L1592.5 1426 Z" fill="#fff"/>
 <path d="M1602 1423.5 H1617 M1609.5 1415 V1432 M1602 1423.5 L1605 1420.5 M1602 1423.5 L1605 1426.5 M1617 1423.5 L1614 1420.5 M1617 1423.5 L1614 1426.5 M1609.5 1415 L1606.5 1418 M1609.5 1415 L1612.5 1418 M1609.5 1432 L1606.5 1429 M1609.5 1432 L1612.5 1429" fill="none" stroke="#5aaef0" stroke-width="2"/>
 <circle cx="1631" cy="1422.5" r="5.2" fill="#eaf5ff" stroke="#5aaef0" stroke-width="2.2"/>
 <path d="M1634.5 1426 L1639.5 1431.5" stroke="#5aaef0" stroke-width="3"/>
 <path d="M1645.5 1426 L1648.5 1423 L1651.5 1426 Z" fill="#fff"/>
 <path d="M1675 1419 L1664 1429 M1661 1424 L1661 1432 L1669 1432 Z" fill="#5aaef0" stroke="#5aaef0" stroke-width="2.6"/>
 <path d="M1685 1431 L1697 1421 M1691 1418.5 L1699 1418.5 L1699 1426 Z" fill="#8797aa" stroke="#8797aa" stroke-width="2.4"/>
</svg>
<svg class="a" style="left:0;top:0" width="1720" height="1440" viewBox="0 0 1720 1440">
<defs>
 <filter id="blur6" x="-20%" y="-20%" width="140%" height="140%"><feGaussianBlur stdDeviation="6"/></filter>
 <filter id="blur2" x="-20%" y="-20%" width="140%" height="140%"><feGaussianBlur stdDeviation="2"/></filter>
 <filter id="blur3" x="-20%" y="-20%" width="140%" height="140%"><feGaussianBlur stdDeviation="3"/></filter>
 <filter id="blur10" x="-30%" y="-30%" width="160%" height="160%"><feGaussianBlur stdDeviation="10"/></filter>
 <clipPath id="diskclip"><ellipse cx="916" cy="760.3" rx="305" ry="430.5"/></clipPath>
 <linearGradient id="pingrad" x1="0" y1="0" x2="0" y2="1">
  <stop offset="0" stop-color="#9a9a9a"/><stop offset=".12" stop-color="#adadad"/><stop offset=".35" stop-color="#bcbcbc"/><stop offset=".62" stop-color="#b7b7b7"/><stop offset=".86" stop-color="#a2a2a2"/><stop offset="1" stop-color="#7c7c7c"/>
 </linearGradient>
 <linearGradient id="pinendgrad" x1="0" y1="0" x2="1" y2="0">
  <stop offset="0" stop-color="#777" stop-opacity=".55"/><stop offset=".6" stop-color="#888" stop-opacity=".15"/><stop offset="1" stop-color="#888" stop-opacity="0"/>
 </linearGradient>
 <linearGradient id="hub" x1="0" y1="0" x2="0" y2="1">
  <stop offset="0" stop-color="#a9a9a9"/><stop offset=".2" stop-color="#b8b8b8"/><stop offset=".45" stop-color="#bcbcbc"/><stop offset=".7" stop-color="#b2b2b2"/><stop offset=".88" stop-color="#9e9e9e"/><stop offset=".95" stop-color="#7a7a7a"/><stop offset="1" stop-color="#6a6a6a"/>
 </linearGradient>
 <linearGradient id="wall" x1="0" y1="0" x2="1" y2="0">
  <stop offset="0" stop-color="#9a9a9a"/><stop offset="1" stop-color="#a8a8a8"/>
 </linearGradient>
 <linearGradient id="llwall" gradientUnits="userSpaceOnUse" x1="0" y1="790" x2="0" y2="1142">
  <stop offset="0" stop-color="#a6a6a6"/><stop offset=".45" stop-color="#9a9a9a"/><stop offset=".8" stop-color="#828282"/><stop offset="1" stop-color="#6a6a6a"/>
 </linearGradient>
 <clipPath id="hubclip"><path d="M1068 663.3 L917 663.3 A69.5 96.7 0 0 0 917 857 L1068 857 Z"/></clipPath>
</defs>
<ellipse cx="916" cy="760.3" rx="305" ry="430.5" fill="#8b8b8b"/>
<g clip-path="url(#diskclip)" opacity=".18">
<path d="M653.6 697.9 L655.3 684.4 L657.4 671.0 L659.8 657.8 L662.5 644.6 L665.6 631.6 L669.0 618.8 L672.7 606.1 L676.7 593.7 L681.1 581.4 L685.7 569.4 L690.7 557.6 L695.9 546.1 L701.5 534.8 L707.3 523.8 L713.4 513.1 L719.7 502.8 L726.3 492.7 L733.2 483.0 L740.3 473.6 L747.6 464.6 L755.1 456.0 L762.9 447.8 L770.9 439.9 L779.0 432.4 L787.4 425.4 L795.9 418.8 L804.6 412.6 L813.4 406.9 L822.4 401.5 L831.4 396.7 L840.7 392.3 L850.0 388.4 L859.4 384.9 L868.9 381.9 L878.4 379.4 L888.0 377.3 Q903.0 376.0 905.0 398.0 L916.5 548.0 Q912.0 570.5 895.9 570.1 L895.9 570.1 L891.2 571.6 L886.5 573.3 L881.8 575.3 L877.2 577.5 L872.7 579.9 L868.2 582.6 L863.8 585.5 L859.4 588.6 L855.2 591.9 L851.0 595.4 L846.9 599.1 L842.9 603.0 L839.0 607.1 L835.2 611.4 L831.6 615.9 L828.0 620.6 L824.6 625.5 L821.3 630.5 L818.1 635.6 L815.0 641.0 L812.1 646.4 L809.3 652.1 L806.7 657.8 L804.2 663.7 L801.9 669.7 L799.7 675.8 L797.6 682.0 L795.8 688.3 L794.0 694.7 L792.5 701.2 L791.1 707.8 L789.9 714.4 L788.8 721.1 Q789.5 740.0 775.0 738.0 L667.0 723.0 Q652.0 721.0 653.0 703.0 Z" fill="none" stroke="#000" stroke-width="16" filter="url(#blur6)" transform="translate(-8.5 0)"/>
<path d="M950.8 400.0 Q953.2 376.3 968.9 379.2 L968.9 379.2 L978.5 381.7 L988.0 384.7 L997.4 388.1 L1006.8 392.0 L1016.0 396.4 L1025.2 401.3 L1034.2 406.6 L1043.0 412.3 L1051.7 418.5 L1060.3 425.1 L1068.7 432.2 L1076.8 439.6 L1084.8 447.5 L1092.6 455.8 L1100.2 464.4 L1107.6 473.4 L1114.7 482.8 L1121.6 492.6 L1128.2 502.7 L1134.6 513.1 L1140.7 523.8 L1146.5 534.8 L1152.1 546.1 L1157.3 557.7 L1162.3 569.5 L1167.0 581.6 L1171.3 593.9 L1175.4 606.4 L1179.1 619.1 L1182.5 632.0 L1185.6 645.0 L1188.3 658.2 L1190.7 671.5 L1192.8 685.0 L1194.5 698.5 L1195.9 712.1 Q1197.5 729.5 1183.3 731.7 L1135.4 739.3 L1066.0 741.0 L1060.1 728.2 L1059.2 721.4 L1058.2 714.6 L1056.9 707.9 L1055.5 701.2 L1053.9 694.7 L1052.2 688.2 L1050.3 681.8 L1048.2 675.5 L1046.0 669.3 L1043.6 663.2 L1041.1 657.2 L1038.4 651.4 L1035.5 645.7 L1032.6 640.2 L1029.4 634.8 L1026.2 629.6 L1022.8 624.6 L1019.3 619.7 L1015.7 615.0 L1011.9 610.5 L1008.0 606.1 L1004.1 602.0 L1000.0 598.1 L995.8 594.4 L991.6 590.9 L987.2 587.6 L982.8 584.5 L978.3 581.6 L973.7 579.0 L969.1 576.6 L964.4 574.5 L959.7 572.6 L954.9 570.9 L950.0 569.5 Q939.5 566.0 940.0 555.0 Z" fill="none" stroke="#000" stroke-width="16" filter="url(#blur6)" transform="translate(-8.5 0)"/>
<path d="M667.0 787.5 L774.0 772.0 Q790.0 770.0 787.2 785.2 L787.2 785.2 L787.9 791.9 L788.8 798.7 L789.8 805.4 L791.1 812.0 L792.4 818.6 L794.0 825.1 L795.7 831.5 L797.6 837.9 L799.6 844.1 L801.8 850.2 L804.2 856.3 L806.7 862.1 L809.3 867.9 L812.1 873.6 L815.0 879.0 L818.1 884.4 L821.3 889.6 L824.6 894.6 L828.1 899.5 L831.6 904.1 L835.3 908.6 L839.1 913.0 L843.0 917.1 L847.0 921.0 L851.1 924.7 L855.3 928.3 L859.6 931.6 L863.9 934.7 L868.4 937.5 L872.9 940.2 L877.4 942.6 L882.1 944.8 L886.7 946.8 L891.5 948.5 L896.2 950.0 L901.0 951.3 Q910.0 962.0 909.0 977.0 L899.0 1123.7 Q897.0 1142.5 882.9 1141.6 L882.9 1141.6 L873.3 1139.3 L863.7 1136.5 L854.2 1133.3 L844.8 1129.5 L835.5 1125.3 L826.3 1120.6 L817.2 1115.5 L808.3 1109.9 L799.5 1103.8 L790.8 1097.3 L782.4 1090.4 L774.1 1083.1 L766.0 1075.4 L758.1 1067.2 L750.4 1058.7 L743.0 1049.8 L735.7 1040.5 L728.8 1030.8 L722.0 1020.8 L715.5 1010.5 L709.3 999.9 L703.4 988.9 L697.7 977.7 L692.4 966.2 L687.3 954.4 L682.5 942.4 L678.0 930.1 L673.9 917.6 L670.1 905.0 L666.5 892.1 L663.4 879.1 L660.5 865.9 L658.0 852.6 L655.8 839.2 L654.0 825.6 L652.5 812.0 Q650.0 789.0 667.0 787.5 Z" fill="none" stroke="#000" stroke-width="16" filter="url(#blur6)" transform="translate(-8.5 0)"/>
<path d="M944.4 1125.5 L933.5 977.0 Q933.0 956.0 946.0 951.5 L946.0 951.5 L950.9 950.3 L955.7 948.8 L960.5 947.1 L965.3 945.1 L970.0 942.9 L974.6 940.5 L979.2 937.8 L983.7 934.9 L988.1 931.8 L992.5 928.5 L996.7 924.9 L1000.9 921.1 L1004.9 917.1 L1008.9 913.0 L1012.7 908.6 L1016.5 904.0 L1020.1 899.2 L1023.6 894.3 L1026.9 889.2 L1030.2 883.9 L1033.3 878.5 L1036.2 872.9 L1039.0 867.2 L1041.7 861.3 L1044.2 855.3 L1046.6 849.2 L1048.8 842.9 L1050.8 836.6 L1052.7 830.1 L1054.4 823.6 L1055.9 817.0 L1057.3 810.3 L1058.5 803.5 L1059.5 796.7 L1060.4 789.9 L1066.0 790.5 L1182.0 797.6 Q1196.0 800.0 1195.2 814.9 L1195.2 814.9 L1193.7 828.3 L1191.8 841.6 L1189.6 854.9 L1187.1 868.0 L1184.2 880.9 L1181.0 893.8 L1177.5 906.4 L1173.7 918.9 L1169.6 931.2 L1165.1 943.3 L1160.4 955.1 L1155.4 966.7 L1150.1 978.1 L1144.5 989.1 L1138.6 999.9 L1132.5 1010.4 L1126.1 1020.6 L1119.5 1030.5 L1112.6 1040.0 L1105.5 1049.2 L1098.2 1058.0 L1090.6 1066.4 L1082.8 1074.5 L1074.9 1082.2 L1066.7 1089.5 L1058.4 1096.4 L1049.9 1102.8 L1041.3 1108.8 L1032.5 1114.4 L1023.6 1119.6 L1014.5 1124.3 L1005.4 1128.6 L996.1 1132.4 L986.8 1135.7 L977.3 1138.6 L967.9 1141.0 L958.3 1143.0 Q944.0 1144.0 944.4 1125.5 Z" fill="none" stroke="#000" stroke-width="16" filter="url(#blur6)" transform="translate(-8.5 0)"/>
<ellipse cx="980" cy="760" rx="150" ry="105" fill="#000" filter="url(#blur10)" opacity=".6"/>
</g>
<ellipse cx="916" cy="760.3" rx="305" ry="430.5" fill="none" stroke="#4d4d4d" stroke-width="1.1"/>
<path d="M653.6 697.9 L655.3 684.4 L657.4 671.0 L659.8 657.8 L662.5 644.6 L665.6 631.6 L669.0 618.8 L672.7 606.1 L676.7 593.7 L681.1 581.4 L685.7 569.4 L690.7 557.6 L695.9 546.1 L701.5 534.8 L707.3 523.8 L713.4 513.1 L719.7 502.8 L726.3 492.7 L733.2 483.0 L740.3 473.6 L747.6 464.6 L755.1 456.0 L762.9 447.8 L770.9 439.9 L779.0 432.4 L787.4 425.4 L795.9 418.8 L804.6 412.6 L813.4 406.9 L822.4 401.5 L831.4 396.7 L840.7 392.3 L850.0 388.4 L859.4 384.9 L868.9 381.9 L878.4 379.4 L888.0 377.3 Q903.0 376.0 905.0 398.0 L916.5 548.0 Q912.0 570.5 895.9 570.1 L895.9 570.1 L891.2 571.6 L886.5 573.3 L881.8 575.3 L877.2 577.5 L872.7 579.9 L868.2 582.6 L863.8 585.5 L859.4 588.6 L855.2 591.9 L851.0 595.4 L846.9 599.1 L842.9 603.0 L839.0 607.1 L835.2 611.4 L831.6 615.9 L828.0 620.6 L824.6 625.5 L821.3 630.5 L818.1 635.6 L815.0 641.0 L812.1 646.4 L809.3 652.1 L806.7 657.8 L804.2 663.7 L801.9 669.7 L799.7 675.8 L797.6 682.0 L795.8 688.3 L794.0 694.7 L792.5 701.2 L791.1 707.8 L789.9 714.4 L788.8 721.1 Q789.5 740.0 775.0 738.0 L667.0 723.0 Q652.0 721.0 653.0 703.0 Z" fill="#a3a3a3" stroke="#444" stroke-width=".9" stroke-linejoin="round" transform="translate(-8.5 0)"/>
<path d="M950.8 400.0 Q953.2 376.3 968.9 379.2 L968.9 379.2 L978.5 381.7 L988.0 384.7 L997.4 388.1 L1006.8 392.0 L1016.0 396.4 L1025.2 401.3 L1034.2 406.6 L1043.0 412.3 L1051.7 418.5 L1060.3 425.1 L1068.7 432.2 L1076.8 439.6 L1084.8 447.5 L1092.6 455.8 L1100.2 464.4 L1107.6 473.4 L1114.7 482.8 L1121.6 492.6 L1128.2 502.7 L1134.6 513.1 L1140.7 523.8 L1146.5 534.8 L1152.1 546.1 L1157.3 557.7 L1162.3 569.5 L1167.0 581.6 L1171.3 593.9 L1175.4 606.4 L1179.1 619.1 L1182.5 632.0 L1185.6 645.0 L1188.3 658.2 L1190.7 671.5 L1192.8 685.0 L1194.5 698.5 L1195.9 712.1 Q1197.5 729.5 1183.3 731.7 L1135.4 739.3 L1066.0 741.0 L1060.1 728.2 L1059.2 721.4 L1058.2 714.6 L1056.9 707.9 L1055.5 701.2 L1053.9 694.7 L1052.2 688.2 L1050.3 681.8 L1048.2 675.5 L1046.0 669.3 L1043.6 663.2 L1041.1 657.2 L1038.4 651.4 L1035.5 645.7 L1032.6 640.2 L1029.4 634.8 L1026.2 629.6 L1022.8 624.6 L1019.3 619.7 L1015.7 615.0 L1011.9 610.5 L1008.0 606.1 L1004.1 602.0 L1000.0 598.1 L995.8 594.4 L991.6 590.9 L987.2 587.6 L982.8 584.5 L978.3 581.6 L973.7 579.0 L969.1 576.6 L964.4 574.5 L959.7 572.6 L954.9 570.9 L950.0 569.5 Q939.5 566.0 940.0 555.0 Z" fill="#a3a3a3" stroke="#444" stroke-width=".9" stroke-linejoin="round" transform="translate(-8.5 0)"/>
<path d="M667.0 787.5 L774.0 772.0 Q790.0 770.0 787.2 785.2 L787.2 785.2 L787.9 791.9 L788.8 798.7 L789.8 805.4 L791.1 812.0 L792.4 818.6 L794.0 825.1 L795.7 831.5 L797.6 837.9 L799.6 844.1 L801.8 850.2 L804.2 856.3 L806.7 862.1 L809.3 867.9 L812.1 873.6 L815.0 879.0 L818.1 884.4 L821.3 889.6 L824.6 894.6 L828.1 899.5 L831.6 904.1 L835.3 908.6 L839.1 913.0 L843.0 917.1 L847.0 921.0 L851.1 924.7 L855.3 928.3 L859.6 931.6 L863.9 934.7 L868.4 937.5 L872.9 940.2 L877.4 942.6 L882.1 944.8 L886.7 946.8 L891.5 948.5 L896.2 950.0 L901.0 951.3 Q910.0 962.0 909.0 977.0 L899.0 1123.7 Q897.0 1142.5 882.9 1141.6 L882.9 1141.6 L873.3 1139.3 L863.7 1136.5 L854.2 1133.3 L844.8 1129.5 L835.5 1125.3 L826.3 1120.6 L817.2 1115.5 L808.3 1109.9 L799.5 1103.8 L790.8 1097.3 L782.4 1090.4 L774.1 1083.1 L766.0 1075.4 L758.1 1067.2 L750.4 1058.7 L743.0 1049.8 L735.7 1040.5 L728.8 1030.8 L722.0 1020.8 L715.5 1010.5 L709.3 999.9 L703.4 988.9 L697.7 977.7 L692.4 966.2 L687.3 954.4 L682.5 942.4 L678.0 930.1 L673.9 917.6 L670.1 905.0 L666.5 892.1 L663.4 879.1 L660.5 865.9 L658.0 852.6 L655.8 839.2 L654.0 825.6 L652.5 812.0 Q650.0 789.0 667.0 787.5 Z" fill="url(#llwall)" stroke="#444" stroke-width=".9" stroke-linejoin="round" transform="translate(-8.5 0)"/>
<path d="M944.4 1125.5 L933.5 977.0 Q933.0 956.0 946.0 951.5 L946.0 951.5 L950.9 950.3 L955.7 948.8 L960.5 947.1 L965.3 945.1 L970.0 942.9 L974.6 940.5 L979.2 937.8 L983.7 934.9 L988.1 931.8 L992.5 928.5 L996.7 924.9 L1000.9 921.1 L1004.9 917.1 L1008.9 913.0 L1012.7 908.6 L1016.5 904.0 L1020.1 899.2 L1023.6 894.3 L1026.9 889.2 L1030.2 883.9 L1033.3 878.5 L1036.2 872.9 L1039.0 867.2 L1041.7 861.3 L1044.2 855.3 L1046.6 849.2 L1048.8 842.9 L1050.8 836.6 L1052.7 830.1 L1054.4 823.6 L1055.9 817.0 L1057.3 810.3 L1058.5 803.5 L1059.5 796.7 L1060.4 789.9 L1066.0 790.5 L1182.0 797.6 Q1196.0 800.0 1195.2 814.9 L1195.2 814.9 L1193.7 828.3 L1191.8 841.6 L1189.6 854.9 L1187.1 868.0 L1184.2 880.9 L1181.0 893.8 L1177.5 906.4 L1173.7 918.9 L1169.6 931.2 L1165.1 943.3 L1160.4 955.1 L1155.4 966.7 L1150.1 978.1 L1144.5 989.1 L1138.6 999.9 L1132.5 1010.4 L1126.1 1020.6 L1119.5 1030.5 L1112.6 1040.0 L1105.5 1049.2 L1098.2 1058.0 L1090.6 1066.4 L1082.8 1074.5 L1074.9 1082.2 L1066.7 1089.5 L1058.4 1096.4 L1049.9 1102.8 L1041.3 1108.8 L1032.5 1114.4 L1023.6 1119.6 L1014.5 1124.3 L1005.4 1128.6 L996.1 1132.4 L986.8 1135.7 L977.3 1138.6 L967.9 1141.0 L958.3 1143.0 Q944.0 1144.0 944.4 1125.5 Z" fill="#a3a3a3" stroke="#444" stroke-width=".9" stroke-linejoin="round" transform="translate(-8.5 0)"/>
<path d="M653.6 697.9 L655.3 684.4 L657.4 671.0 L659.8 657.8 L662.5 644.6 L665.6 631.6 L669.0 618.8 L672.7 606.1 L676.7 593.7 L681.1 581.4 L685.7 569.4 L690.7 557.6 L695.9 546.1 L701.5 534.8 L707.3 523.8 L713.4 513.1 L719.7 502.8 L726.3 492.7 L733.2 483.0 L740.3 473.6 L747.6 464.6 L755.1 456.0 L762.9 447.8 L770.9 439.9 L779.0 432.4 L787.4 425.4 L795.9 418.8 L804.6 412.6 L813.4 406.9 L822.4 401.5 L831.4 396.7 L840.7 392.3 L850.0 388.4 L859.4 384.9 L868.9 381.9 L878.4 379.4 L888.0 377.3 Q903.0 376.0 905.0 398.0 L916.5 548.0 Q912.0 570.5 895.9 570.1 L895.9 570.1 L891.2 571.6 L886.5 573.3 L881.8 575.3 L877.2 577.5 L872.7 579.9 L868.2 582.6 L863.8 585.5 L859.4 588.6 L855.2 591.9 L851.0 595.4 L846.9 599.1 L842.9 603.0 L839.0 607.1 L835.2 611.4 L831.6 615.9 L828.0 620.6 L824.6 625.5 L821.3 630.5 L818.1 635.6 L815.0 641.0 L812.1 646.4 L809.3 652.1 L806.7 657.8 L804.2 663.7 L801.9 669.7 L799.7 675.8 L797.6 682.0 L795.8 688.3 L794.0 694.7 L792.5 701.2 L791.1 707.8 L789.9 714.4 L788.8 721.1 Q789.5 740.0 775.0 738.0 L667.0 723.0 Q652.0 721.0 653.0 703.0 Z" fill="#8c8c8c" stroke="#444" stroke-width=".9" stroke-linejoin="round"/>
<path d="M950.8 400.0 Q953.2 376.3 968.9 379.2 L968.9 379.2 L978.5 381.7 L988.0 384.7 L997.4 388.1 L1006.8 392.0 L1016.0 396.4 L1025.2 401.3 L1034.2 406.6 L1043.0 412.3 L1051.7 418.5 L1060.3 425.1 L1068.7 432.2 L1076.8 439.6 L1084.8 447.5 L1092.6 455.8 L1100.2 464.4 L1107.6 473.4 L1114.7 482.8 L1121.6 492.6 L1128.2 502.7 L1134.6 513.1 L1140.7 523.8 L1146.5 534.8 L1152.1 546.1 L1157.3 557.7 L1162.3 569.5 L1167.0 581.6 L1171.3 593.9 L1175.4 606.4 L1179.1 619.1 L1182.5 632.0 L1185.6 645.0 L1188.3 658.2 L1190.7 671.5 L1192.8 685.0 L1194.5 698.5 L1195.9 712.1 Q1197.5 729.5 1183.3 731.7 L1135.4 739.3 L1066.0 741.0 L1060.1 728.2 L1059.2 721.4 L1058.2 714.6 L1056.9 707.9 L1055.5 701.2 L1053.9 694.7 L1052.2 688.2 L1050.3 681.8 L1048.2 675.5 L1046.0 669.3 L1043.6 663.2 L1041.1 657.2 L1038.4 651.4 L1035.5 645.7 L1032.6 640.2 L1029.4 634.8 L1026.2 629.6 L1022.8 624.6 L1019.3 619.7 L1015.7 615.0 L1011.9 610.5 L1008.0 606.1 L1004.1 602.0 L1000.0 598.1 L995.8 594.4 L991.6 590.9 L987.2 587.6 L982.8 584.5 L978.3 581.6 L973.7 579.0 L969.1 576.6 L964.4 574.5 L959.7 572.6 L954.9 570.9 L950.0 569.5 Q939.5 566.0 940.0 555.0 Z" fill="#8c8c8c" stroke="#444" stroke-width=".9" stroke-linejoin="round"/>
<path d="M667.0 787.5 L774.0 772.0 Q790.0 770.0 787.2 785.2 L787.2 785.2 L787.9 791.9 L788.8 798.7 L789.8 805.4 L791.1 812.0 L792.4 818.6 L794.0 825.1 L795.7 831.5 L797.6 837.9 L799.6 844.1 L801.8 850.2 L804.2 856.3 L806.7 862.1 L809.3 867.9 L812.1 873.6 L815.0 879.0 L818.1 884.4 L821.3 889.6 L824.6 894.6 L828.1 899.5 L831.6 904.1 L835.3 908.6 L839.1 913.0 L843.0 917.1 L847.0 921.0 L851.1 924.7 L855.3 928.3 L859.6 931.6 L863.9 934.7 L868.4 937.5 L872.9 940.2 L877.4 942.6 L882.1 944.8 L886.7 946.8 L891.5 948.5 L896.2 950.0 L901.0 951.3 Q910.0 962.0 909.0 977.0 L899.0 1123.7 Q897.0 1142.5 882.9 1141.6 L882.9 1141.6 L873.3 1139.3 L863.7 1136.5 L854.2 1133.3 L844.8 1129.5 L835.5 1125.3 L826.3 1120.6 L817.2 1115.5 L808.3 1109.9 L799.5 1103.8 L790.8 1097.3 L782.4 1090.4 L774.1 1083.1 L766.0 1075.4 L758.1 1067.2 L750.4 1058.7 L743.0 1049.8 L735.7 1040.5 L728.8 1030.8 L722.0 1020.8 L715.5 1010.5 L709.3 999.9 L703.4 988.9 L697.7 977.7 L692.4 966.2 L687.3 954.4 L682.5 942.4 L678.0 930.1 L673.9 917.6 L670.1 905.0 L666.5 892.1 L663.4 879.1 L660.5 865.9 L658.0 852.6 L655.8 839.2 L654.0 825.6 L652.5 812.0 Q650.0 789.0 667.0 787.5 Z" fill="#8c8c8c" stroke="#444" stroke-width=".9" stroke-linejoin="round"/>
<path d="M944.4 1125.5 L933.5 977.0 Q933.0 956.0 946.0 951.5 L946.0 951.5 L950.9 950.3 L955.7 948.8 L960.5 947.1 L965.3 945.1 L970.0 942.9 L974.6 940.5 L979.2 937.8 L983.7 934.9 L988.1 931.8 L992.5 928.5 L996.7 924.9 L1000.9 921.1 L1004.9 917.1 L1008.9 913.0 L1012.7 908.6 L1016.5 904.0 L1020.1 899.2 L1023.6 894.3 L1026.9 889.2 L1030.2 883.9 L1033.3 878.5 L1036.2 872.9 L1039.0 867.2 L1041.7 861.3 L1044.2 855.3 L1046.6 849.2 L1048.8 842.9 L1050.8 836.6 L1052.7 830.1 L1054.4 823.6 L1055.9 817.0 L1057.3 810.3 L1058.5 803.5 L1059.5 796.7 L1060.4 789.9 L1066.0 790.5 L1182.0 797.6 Q1196.0 800.0 1195.2 814.9 L1195.2 814.9 L1193.7 828.3 L1191.8 841.6 L1189.6 854.9 L1187.1 868.0 L1184.2 880.9 L1181.0 893.8 L1177.5 906.4 L1173.7 918.9 L1169.6 931.2 L1165.1 943.3 L1160.4 955.1 L1155.4 966.7 L1150.1 978.1 L1144.5 989.1 L1138.6 999.9 L1132.5 1010.4 L1126.1 1020.6 L1119.5 1030.5 L1112.6 1040.0 L1105.5 1049.2 L1098.2 1058.0 L1090.6 1066.4 L1082.8 1074.5 L1074.9 1082.2 L1066.7 1089.5 L1058.4 1096.4 L1049.9 1102.8 L1041.3 1108.8 L1032.5 1114.4 L1023.6 1119.6 L1014.5 1124.3 L1005.4 1128.6 L996.1 1132.4 L986.8 1135.7 L977.3 1138.6 L967.9 1141.0 L958.3 1143.0 Q944.0 1144.0 944.4 1125.5 Z" fill="#8c8c8c" stroke="#444" stroke-width=".9" stroke-linejoin="round"/>
<path d="M645.5 697.5 H654 M644.5 812 H653 M943 396.5 H951 M932 547.5 H940.5 M936 1125.5 H944.5" stroke="#555" stroke-width=".8"/>
<ellipse cx="796.0" cy="554.6" rx="30" ry="19" fill="#000" opacity=".2" filter="url(#blur6)"/>
<ellipse cx="1086.7" cy="554.6" rx="30" ry="19" fill="#000" opacity=".2" filter="url(#blur6)"/>
<ellipse cx="796.0" cy="966.0" rx="30" ry="19" fill="#000" opacity=".2" filter="url(#blur6)"/>
<ellipse cx="1086.7" cy="966.0" rx="30" ry="19" fill="#000" opacity=".2" filter="url(#blur6)"/>
<path d="M780.0 543.6 L922.6 543.6 A7.2 11.0 0 0 1 922.6 565.6 L780.0 565.6 A8 11.0 0 0 1 780.0 543.6 Z" fill="url(#pingrad)"/><path d="M780.0 543.6 A8 11.0 0 0 0 780.0 565.6 L794.0 565.6 L794.0 543.6 Z" fill="url(#pinendgrad)"/><path d="M780.0 543.90 A8 11.0 0 0 0 780.0 565.30" fill="none" stroke="#505050" stroke-width=".9"/><ellipse cx="922.6" cy="554.6" rx="7.2" ry="11.0" fill="#8e8e8e" stroke="#444" stroke-width=".9"/>
<path d="M1070.7 543.6 L1213.5 543.6 A7.2 11.0 0 0 1 1213.5 565.6 L1070.7 565.6 A8 11.0 0 0 1 1070.7 543.6 Z" fill="url(#pingrad)"/><path d="M1070.7 543.6 A8 11.0 0 0 0 1070.7 565.6 L1084.7 565.6 L1084.7 543.6 Z" fill="url(#pinendgrad)"/><path d="M1070.7 543.90 A8 11.0 0 0 0 1070.7 565.30" fill="none" stroke="#505050" stroke-width=".9"/><ellipse cx="1213.5" cy="554.6" rx="7.2" ry="11.0" fill="#8e8e8e" stroke="#444" stroke-width=".9"/>
<path d="M780.0 955.0 L922.6 955.0 A7.2 11.0 0 0 1 922.6 977.0 L780.0 977.0 A8 11.0 0 0 1 780.0 955.0 Z" fill="url(#pingrad)"/><path d="M780.0 955.0 A8 11.0 0 0 0 780.0 977.0 L794.0 977.0 L794.0 955.0 Z" fill="url(#pinendgrad)"/><path d="M780.0 955.30 A8 11.0 0 0 0 780.0 976.70" fill="none" stroke="#505050" stroke-width=".9"/><ellipse cx="922.6" cy="966.0" rx="7.2" ry="11.0" fill="#8e8e8e" stroke="#444" stroke-width=".9"/>
<path d="M1070.7 955.0 L1213.5 955.0 A7.2 11.0 0 0 1 1213.5 977.0 L1070.7 977.0 A8 11.0 0 0 1 1070.7 955.0 Z" fill="url(#pingrad)"/><path d="M1070.7 955.0 A8 11.0 0 0 0 1070.7 977.0 L1084.7 977.0 L1084.7 955.0 Z" fill="url(#pinendgrad)"/><path d="M1070.7 955.30 A8 11.0 0 0 0 1070.7 976.70" fill="none" stroke="#505050" stroke-width=".9"/><ellipse cx="1213.5" cy="966.0" rx="7.2" ry="11.0" fill="#8e8e8e" stroke="#444" stroke-width=".9"/>
<path d="M1068 663.3 L917 663.3 A69.5 96.7 0 0 0 917 857 L1068 857 Z" fill="url(#hub)" stroke="#474747" stroke-width="1"/>
<g clip-path="url(#hubclip)"><path d="M917 663.3 A69.5 96.7 0 0 0 917 857" fill="none" stroke="#000" stroke-opacity=".16" stroke-width="6" filter="url(#blur2)"/></g>
<ellipse cx="1068" cy="760" rx="68.7" ry="96.7" fill="#8d8d8d" stroke="#474747" stroke-width="1"/>
<line x1="915.5" y1="759" x2="915.5" y2="729" stroke="#6f93e6" stroke-width="2"/>
<path d="M911.8 731 L915.5 711.5 L919.2 731 Z" fill="#4d7ff2"/>
<text x="915.5" y="704.5" font-size="10.5" font-weight="bold" fill="#3f45d8" text-anchor="middle" font-family="Liberation Sans">Z</text>
<line x1="916" y1="760" x2="938" y2="760" stroke="#e25a5a" stroke-width="2"/>
<path d="M935 756.2 L951.5 760 L935 763.8 Z" fill="#f01414"/>
<circle cx="915.5" cy="760" r="2" fill="#8a8a8a" stroke="#666" stroke-width=".6"/>
<text x="958.5" y="764.5" font-size="10.5" font-weight="bold" fill="#b8402a" text-anchor="middle" font-family="Liberation Sans">X</text>
</svg></body></html>
